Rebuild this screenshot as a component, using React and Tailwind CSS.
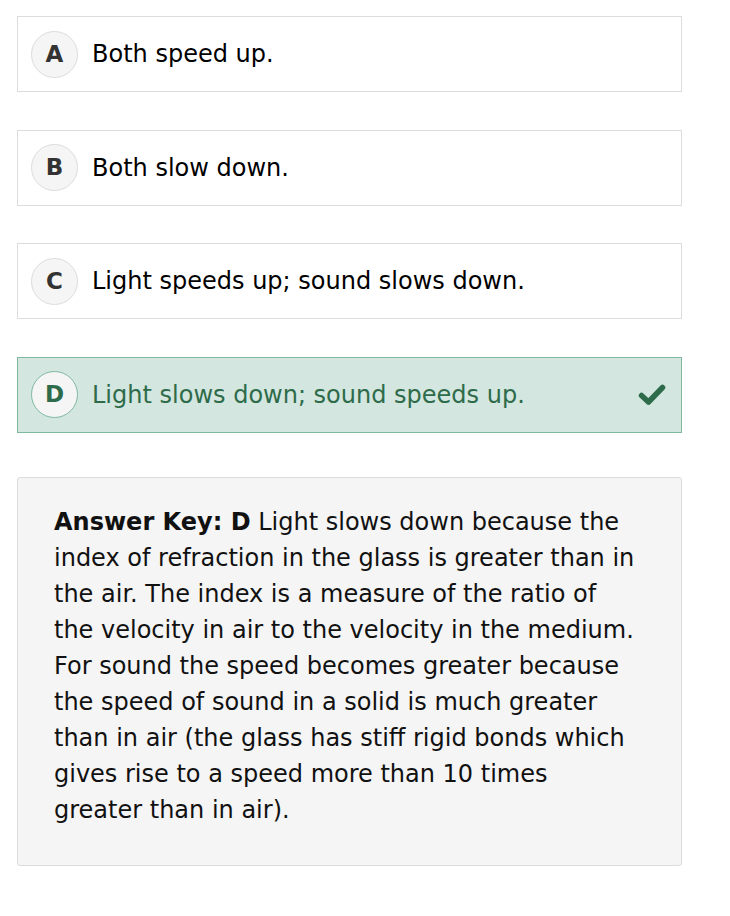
const options = [
  { letter: 'A', text: 'Both speed up.' },
  { letter: 'B', text: 'Both slow down.' },
  { letter: 'C', text: 'Light speeds up; sound slows down.' },
  { letter: 'D', text: 'Light slows down; sound speeds up.', correct: true },
];

const Check = () => (
  <svg width="28" height="21" viewBox="0 0 28 21" fill="none">
    <path
      d="M3.5 11.5 L10.5 18 L24.5 3.5"
      stroke="#2e6b4a"
      strokeWidth="5.5"
      strokeLinecap="round"
      strokeLinejoin="round"
    />
  </svg>
);

const Option = ({ letter, text, correct }) => (
  <div
    className={
      'flex h-[76px] items-center border pl-[13px] pr-[15px] ' +
      (correct ? 'border-[#80b9a0] bg-[#d3e6df] text-[#2e6b4a]' : 'border-[#dcdcdc] bg-white text-black')
    }
  >
    <div
      className={
        'flex h-[47px] w-[47px] shrink-0 items-center justify-center rounded-full border bg-[#f5f5f5] text-[23px] font-bold ' +
        (correct ? 'border-[#80b9a0] text-[#2e6b4a]' : 'border-[#dcdcdc] text-[#333]')
      }
    >
      {letter}
    </div>
    <span className="ml-[14px] flex-1 text-[24px]">{text}</span>
    {correct ? <Check /> : null}
  </div>
);

export default function App() {
  return (
    <div className="min-h-[916px] bg-white pt-[16px] pl-[17px]" style={{ fontFamily: '"DejaVu Sans", Verdana, sans-serif' }}>
      <div className="flex w-[665px] flex-col gap-[37.5px]">
        {options.map((o) => (
          <Option key={o.letter} {...o} />
        ))}
      </div>
      <div className="mt-[44px] w-[665px] rounded-[3px] border border-[#dcdcdc] bg-[#f5f5f5] pl-[36px] pr-[42px] pt-[26px] pb-[37px] text-[24px] leading-[36px] text-[#111]">
        <span className="font-bold">Answer Key: D</span> Light slows down because the index of refraction in the glass is
        greater than in the air. The index is a measure of the ratio of the velocity in air to the velocity in the
        medium. For sound the speed becomes greater because the speed of sound in a solid is much greater than in air
        (the glass has stiff rigid bonds which gives rise to a speed more than 10 times greater than in air).
      </div>
    </div>
  );
}
